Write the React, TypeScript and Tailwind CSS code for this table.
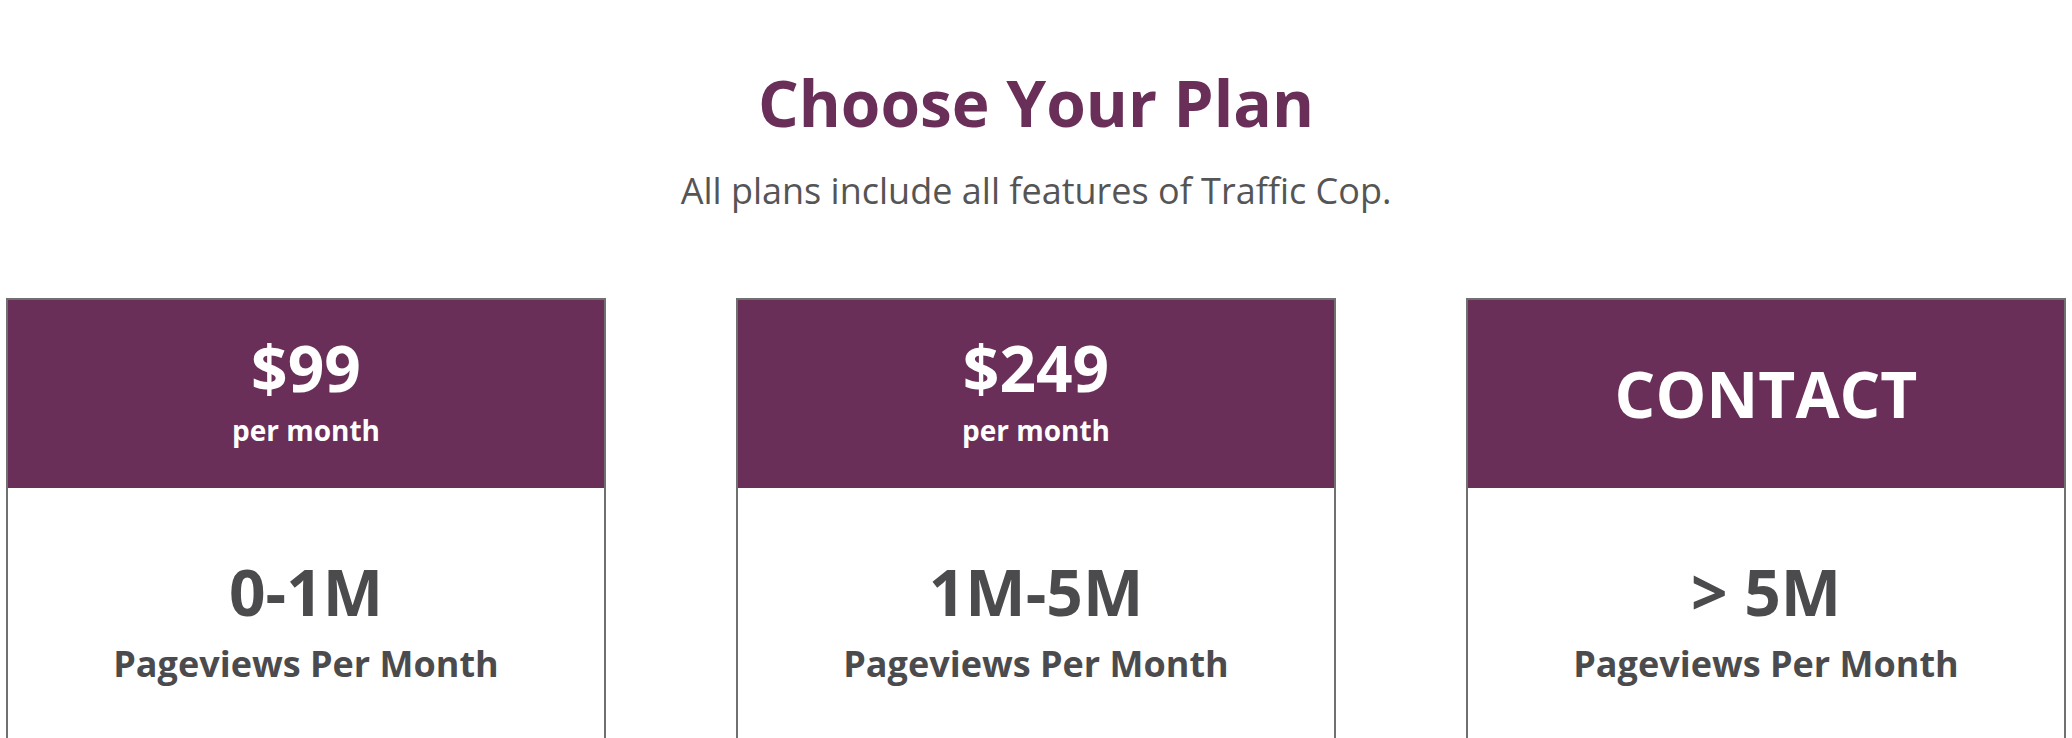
const plans = [
  { price: "$99", period: "per month", range: "0-1M" },
  { price: "$249", period: "per month", range: "1M-5M" },
  { price: "CONTACT", period: null, range: "> 5M" },
];

export default function App() {
  return (
    <div className="min-h-screen bg-white font-['Open_Sans',sans-serif]">
      <div className="pt-[65px] text-center">
        <h2 className="text-[64px] font-bold leading-[1.2] text-[#692f59]">
          Choose Your Plan
        </h2>
        <p className="mt-[22px] text-[36px] leading-[1.5] text-[#555555]">
          All plans include all features of Traffic Cop.
        </p>
      </div>

      <div className="mt-[80px] flex justify-center gap-[130px]">
        {plans.map((p) => (
          <div
            key={p.range}
            className="w-[600px] border-2 border-b-0 border-[#707070] h-[440px]"
          >
            <div
              className={
                "h-[188px] bg-[#692f59] flex flex-col items-center justify-center text-white font-bold " +
                (p.period ? "pb-[8px]" : "")
              }
            >
              <span className="text-[64px] leading-none">{p.price}</span>
              {p.period && (
                <span className="mt-[16px] text-[28px] leading-none">
                  {p.period}
                </span>
              )}
            </div>
            <div className="pt-[72px] text-center font-bold text-[#4b4b4d]">
              <p className="text-[64px] leading-none">{p.range}</p>
              <p className="mt-[22px] text-[36px] leading-none">
                Pageviews Per Month
              </p>
            </div>
          </div>
        ))}
      </div>
    </div>
  );
}
